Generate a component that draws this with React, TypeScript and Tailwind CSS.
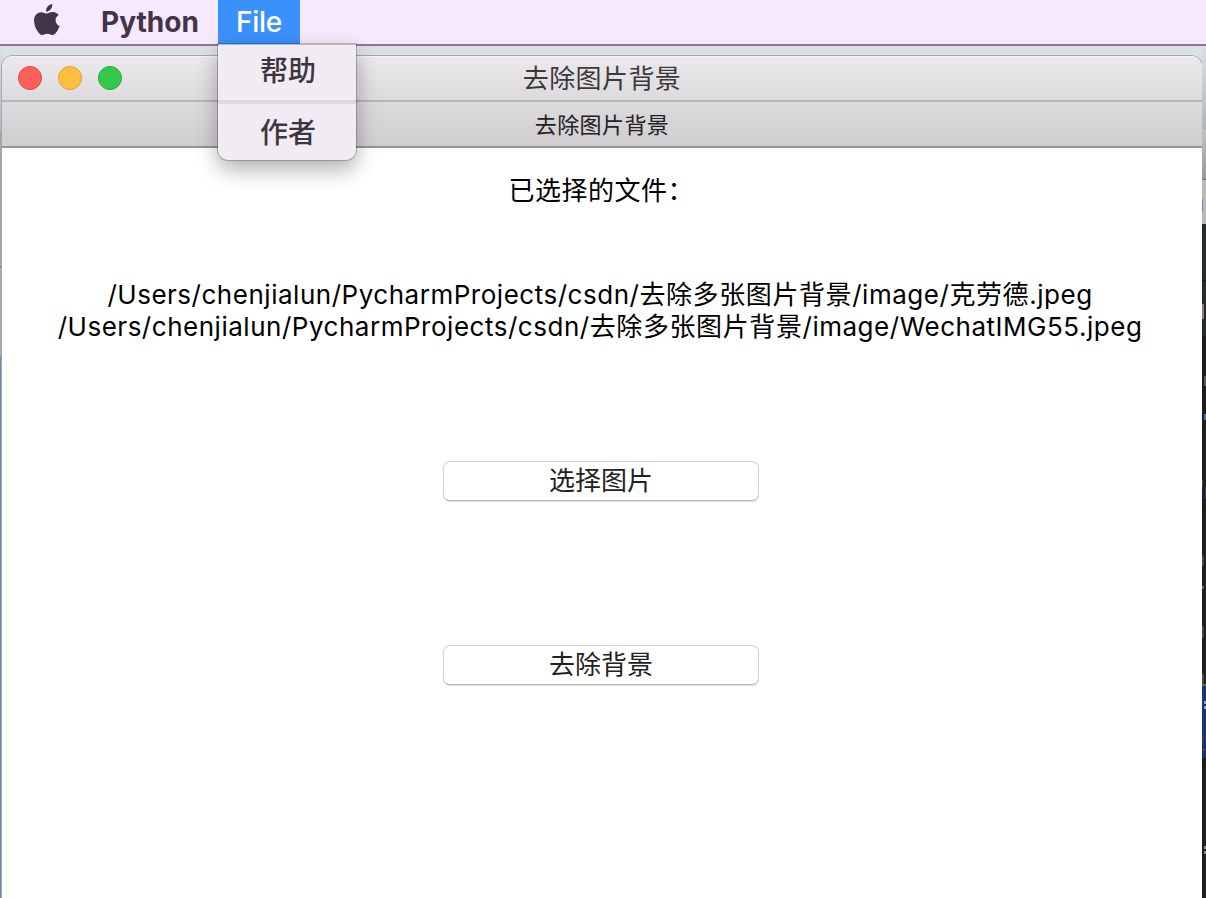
import React from 'react';

interface FilePath {
  dir: string;
  folder: string;
  sub: string;
  nameCn?: string;
  nameEn: string;
}

const files: FilePath[] = [
  {
    dir: '/Users/chenjialun/PycharmProjects/csdn/',
    folder: '去除多张图片背景',
    sub: '/image/',
    nameCn: '克劳德',
    nameEn: '.jpeg',
  },
  {
    dir: '/Users/chenjialun/PycharmProjects/csdn/',
    folder: '去除多张图片背景',
    sub: '/image/',
    nameEn: 'WechatIMG55.jpeg',
  },
];

const AppleLogo: React.FC = () => (
  <svg viewBox="0 0 26 32" width="26" height="32" fill="#43344a">
    <path d="M18.3 0c.3 2-.5 3.900-1.700 5.300-1.200 1.400-3 2.400-4.600 2.300-.2-1.900.7-3.900 1.800-5.100C15 1.100 16.900.1 18.300 0z" />
    <path d="M24.700 11.100c-1.900 1.200-3.100 2.900-3.100 5.200 0 2.700 1.600 4.900 4 5.800-.6 1.700-1.400 3.300-2.400 4.800-1.300 2-2.900 4.100-5 4.100-1.900 0-2.500-1.200-4.900-1.200-2.300 0-3.100 1.200-4.900 1.300-2 .1-3.700-2.200-5-4.100C.6 23.100-1.300 16 1.200 11.700 2.500 9.500 4.800 8.200 7.300 8.200c2.100 0 4 1.400 5.300 1.400 1.200 0 3.600-1.700 6.100-1.500 1.100 0 4.100.4 6 3z" />
  </svg>
);

const FileMenu: React.FC = () => (
  <div className="absolute left-0 top-[44px] z-20 w-[138px] h-[116px] flex flex-col rounded-b-[10px] border-t border-[#bab7be] bg-[#f1ecf3] text-[28px] font-medium text-[#3d363f] shadow-[0_0_0_1px_rgba(0,0,0,0.22),0_9px_22px_rgba(0,0,0,0.32)]">
    <div className="h-[55px] leading-[53px] text-center pl-[2px]">帮助</div>
    <div className="h-[4px] bg-[#dfdae1]" />
    <div className="h-[56px] leading-[58px] text-center pl-[2px]">作者</div>
  </div>
);

const MenuBar: React.FC = () => (
  <header className="h-[46px] shrink-0 flex bg-[#f7e9fc] border-b-2 border-[#8d7398] text-[28px] leading-[44px]">
    <div className="w-[101px] pl-[34px] pt-[4px]">
      <AppleLogo />
    </div>
    <div className="w-[117px] font-bold text-[#43344a]">Python</div>
    <div className="relative w-[82px] h-[44px] bg-[#3b91fc] text-white text-center">
      <span className="font-medium tracking-[-0.3px]">File</span>
      <FileMenu />
    </div>
  </header>
);

const PushButton: React.FC<{ label: string }> = ({ label }) => (
  <button className="w-[316px] h-[40px] rounded-[7px] border border-[#d2d2d2] border-b-[#b9b9b9] bg-white text-[26px] leading-[38px] text-[#222] shadow-[0_1px_1px_rgba(0,0,0,0.14)]">
    {label}
  </button>
);

const AppWindow: React.FC = () => (
  <section className="mt-[10px] flex-1 flex flex-col rounded-t-[11px] overflow-hidden bg-white shadow-[0_0_0_1px_#a5abad]">
    <div className="h-[46px] shrink-0 flex items-center bg-linear-to-b from-[#ebe9eb] to-[#dddadd] border-t border-t-[#f5f4f5] border-b-2 border-b-[#b8b5b9]">
      <div className="w-[200px] pl-[16px] pb-[2px] flex gap-[16px]">
        <span className="size-[24px] rounded-full bg-[#fc605b] border border-[#df4744]" />
        <span className="size-[24px] rounded-full bg-[#fdbe41] border border-[#dd9e33]" />
        <span className="size-[24px] rounded-full bg-[#35c94b] border border-[#27aa35]" />
      </div>
      <h1 className="flex-1 pt-px text-center text-[26px] leading-[40px] tracking-[0.4px] text-[#3b393c]">去除图片背景</h1>
      <div className="w-[200px]" />
    </div>
    <div className="h-[46px] shrink-0 bg-linear-to-b from-[#dcdadc] to-[#d0cdd0] border-b-2 border-[#969497] text-center text-[22px] leading-[47px] tracking-[0.4px] text-[#222]">
      去除图片背景
    </div>

    <div className="flex-1 flex flex-col items-center pr-[2px] text-black">
      <p className="mt-[23px] h-[40px] leading-[40px] text-[26px] tracking-[0.5px]">
        已选择的文件<span className="inline-block w-[26px]">：</span>
      </p>
      <div className="mt-[68px] h-[64px] -translate-x-px text-[26px] leading-[32px] tracking-[0.52px] text-center whitespace-nowrap">
        {files.map((f) => (
          <p key={f.nameEn} className="h-[32px]">
            <span>{f.dir}</span>
            <span className="tracking-[0.6px]">{f.folder}</span>
            <span>{f.sub}</span>
            {f.nameCn && <span className="tracking-[0.6px]">{f.nameCn}</span>}
            <span>{f.nameEn}</span>
          </p>
        ))}
      </div>
      <div className="mt-[118px] flex flex-col gap-[144px]">
        <PushButton label="选择图片" />
        <PushButton label="去除背景" />
      </div>
    </div>
  </section>
);

// slivers of the windows behind, visible at both sides
const LeftEdge: React.FC = () => (
  <div className="w-[2px] shrink-0 flex flex-col">
    <div className="h-[84px] bg-linear-to-b from-[#dbe0e3] to-[#b3babd]" />
    <div className="h-[136px] bg-[#a3a3a3]" />
    <div className="h-[2px] bg-[#858585]" />
    <div className="h-[88px] bg-[#aaa]" />
    <div className="flex-1 bg-linear-to-r from-[#7795b8] to-[#526e91]" />
  </div>
);

const RightEdge: React.FC = () => (
  <div className="w-[4px] shrink-0 flex flex-col overflow-hidden">
    <div className="h-[84px] bg-linear-to-b from-[#dbe0e3] to-[#aeb7bc]" />
    <div className="h-[49px] bg-linear-to-b from-[#c4c4c4] to-[#979797]" />
    <div className="h-px bg-[#777]" />
    <div className="h-[19px] bg-[#b9b9b9]" />
    <div className="h-[13px] bg-[#b9b9b9]">
      <div className="h-full w-px bg-[#7c83a3]" />
    </div>
    <div className="h-[12px] bg-[#b9b9b9]" />
    <div className="h-[56px] bg-[#262b2c]" />
    <div className="h-[2px] bg-[#1c1e1f]" />
    <div className="h-[22px] bg-[#262b2c]" />
    <div className="h-[15px] bg-[#262b2c]">
      <div className="w-[2px] h-full bg-[#8e7c74]" />
    </div>
    <div className="h-[17px] bg-[#262b2c]" />
    <div className="h-[40px] bg-[#1c1c1c]" />
    <div className="h-[44px] bg-[#1c1c1c] pl-[2px]">
      <div className="h-[10px] w-[2px] bg-[#5c5c5c]" />
      <div className="mt-[28px] h-[6px] w-[2px] bg-[#56749a]" />
    </div>
    <div className="h-[60px] bg-[#1f1f1f]" />
    <div className="h-[76px] bg-[#1f1f1f]">
      <div className="h-[7px] w-px bg-[#4a4441]" />
      <div className="ml-[3px] h-[12px] w-px bg-[#3a3a78]" />
    </div>
    <div className="h-[118px] bg-[#1f1f1f]">
      <div className="h-[10px] w-[2px] bg-[#4a4441]" />
      <div className="mt-[20px] h-[3px] w-[2px] bg-[#6b5c55]" />
      <div className="mt-[37px] h-[12px] w-[2px] bg-[#4a4441]" />
    </div>
    <div className="h-[10px] bg-[#1f1f1f]">
      <div className="h-full w-[2px] bg-[#4f463c]" />
    </div>
    <div className="h-[2px] bg-[#4d7350]" />
    <div className="h-[72px] bg-[#1b3568] pt-[15px] pl-[2px]">
      <div className="size-[3px] bg-[#8ba7ba]" />
      <div className="mt-[2px] size-[3px] bg-[#8ba7ba]" />
      <div className="-ml-[2px] mt-[28px] size-[2px] bg-[#8a3038]" />
      <div className="-ml-px mt-[10px] size-[2px] bg-[#8a3038]" />
    </div>
    <div className="flex-1 bg-[#1f1f1f] pt-[88px] pl-[2px]">
      <div className="size-[3px] bg-[#87939a]" />
      <div className="mt-[2px] size-[3px] bg-[#87939a]" />
    </div>
  </div>
);

export default function App() {
  return (
    <div
      lang="zh-CN"
      className="w-[1206px] h-[898px] flex flex-col overflow-hidden bg-[#dbe0e3] font-[Inter,'Noto_Sans_CJK_SC',sans-serif]"
    >
      <MenuBar />
      <main className="flex-1 min-h-0 flex">
        <LeftEdge />
        <AppWindow />
        <RightEdge />
      </main>
    </div>
  );
}
